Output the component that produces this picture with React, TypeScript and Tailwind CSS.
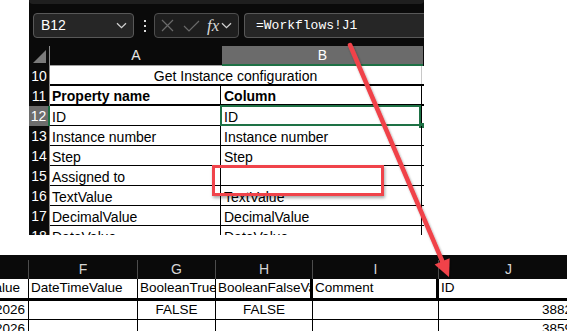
import React from 'react';

const font = "font-['Liberation_Sans',Arial,sans-serif]";

const Chevron: React.FC<{ className?: string }> = ({ className }) => (
  <svg width="11" height="7" viewBox="0 0 11 7" className={className}>
    <path d="M1 1.2 L5.5 5.6 L10 1.2" fill="none" stroke="#d0d0d0" strokeWidth="1.3" />
  </svg>
);

const FormulaBar: React.FC = () => (
  <div className="flex h-[25px] items-center pl-[4px]">
    <div className="flex h-[25px] w-[101px] items-center justify-between rounded-[4px] border border-[#585858] bg-[#262626] pl-[7px] pr-[6px]">
      <span className="text-[14px] text-white">B12</span>
      <Chevron />
    </div>
    <div className="ml-[10px] flex w-[3px] flex-col gap-[3px]">
      <div className="h-[2px] w-[2px] bg-[#d8d8d8]" />
      <div className="h-[2px] w-[2px] bg-[#d8d8d8]" />
      <div className="h-[2px] w-[2px] bg-[#d8d8d8]" />
    </div>
    <div className="ml-[7px] flex h-[25px] w-[85px] items-center rounded-[4px] border border-[#4e4e4e] bg-[#1e1e1e] pl-[6px]">
      <svg width="13" height="13" viewBox="0 0 13 13">
        <path d="M1 1 L12 12 M12 1 L1 12" stroke="#6a6a6a" strokeWidth="1.2" />
      </svg>
      <svg width="17" height="12" viewBox="0 0 17 12" className="ml-[9px]">
        <path d="M1 6 L6 11 L16 1" fill="none" stroke="#6a6a6a" strokeWidth="1.2" />
      </svg>
      <span className="ml-[7px] font-['Liberation_Serif',serif] text-[17px] italic leading-none text-[#d8d8d8]">fx</span>
      <Chevron className="ml-[2px]" />
    </div>
    <div className="ml-[5px] flex h-[25px] flex-1 items-center rounded-l-[4px] border border-r-0 border-[#585858] bg-[#262626] pl-[11px]">
      <span className="font-['Liberation_Mono',monospace] text-[13px] text-white">=Workflows!J1</span>
    </div>
  </div>
);

const TopRow: React.FC<{ n: number; a?: string; b?: string; bold?: boolean; selected?: boolean; thick?: boolean; merged?: string }> = ({ n, a, b, bold, selected, thick, merged }) => (
  <div className="flex h-[20px] shrink-0">
    <div
      className={
        selected
          ? 'flex w-[21px] items-center justify-center border-r-2 border-[#1e7145] bg-[#6d6d6d] text-[14px] text-white'
          : 'flex w-[21px] items-center justify-center border-r border-[#8a8a8a] bg-[#0a0a0a] text-[14px] text-white'
      }
    >
      {n}
    </div>
    <div className={thick ? 'flex flex-1 border-b-2 border-black bg-white text-[14px] leading-[16px] text-black' : 'flex flex-1 border-b border-black bg-white text-[14px] leading-[16px] text-black'}>
      {merged ? (
        <div className="flex w-[372px] items-end justify-center border-r border-[#c8c8c8]">{merged}</div>
      ) : (
        <>
          <div className={bold ? 'flex w-[171px] items-end overflow-hidden whitespace-nowrap border-r border-black pl-[2px] font-bold' : 'flex w-[171px] items-end overflow-hidden whitespace-nowrap border-r border-black pl-[2px]'}>
            {a}
          </div>
          <div className={bold ? 'relative flex w-[201px] items-end whitespace-nowrap border-r border-black pl-[3px] font-bold' : 'relative flex w-[201px] items-end whitespace-nowrap border-r border-black pl-[3px]'}>
            {b}
            {selected && (
              <>
                <div className="absolute -left-[1px] -top-[1px] -bottom-[1px] right-0 border-2 border-[#1e7145]" />
                <div className="absolute -bottom-[3px] -right-[3px] h-[5px] w-[5px] bg-[#1e7145]" />
              </>
            )}
          </div>
        </>
      )}
    </div>
  </div>
);

const TopSheet: React.FC = () => (
  <div className="flex h-[235px]">
    <div className="w-[29px] shrink-0" />
    <div className="flex w-[395px] shrink-0 flex-col overflow-hidden bg-[#0a0a0a]">
      <div className="h-[4px] shrink-0 rounded-b-[4px] bg-[#1f1f1f]" />
      <div className="h-[9px] shrink-0" />
      <FormulaBar />
      <div className="h-[8px] shrink-0" />
      <div className="flex h-[20px] shrink-0">
        <div className="relative w-[21px] border-r border-[#8a8a8a]">
          <svg width="13" height="13" viewBox="0 0 13 13" className="absolute bottom-[3px] right-[3px]">
            <path d="M13 0 L13 13 L0 13 Z" fill="#7a7a7a" />
          </svg>
        </div>
        <div className="flex w-[172px] items-center justify-center border-b border-[#a0a0a0] text-[14px] text-[#e6e6e6]">A</div>
        <div className="flex w-[201px] items-center justify-center border-b-2 border-[#1e7145] bg-[#6b6b6b] text-[14px] text-white">B</div>
      </div>
      <TopRow n={10} merged="Get Instance configuration" thick />
      <TopRow n={11} a="Property name" b="Column" bold thick />
      <TopRow n={12} a="ID" b="ID" selected />
      <TopRow n={13} a="Instance number" b="Instance number" />
      <TopRow n={14} a="Step" b="Step" />
      <TopRow n={15} a="Assigned to" b="" />
      <TopRow n={16} a="TextValue" b="TextValue" />
      <TopRow n={17} a="DecimalValue" b="DecimalValue" />
      <TopRow n={18} a="DateValue" b="DateValue" />
    </div>
  </div>
);

const cols = [29, 109, 78, 97, 126, 140];
const letters = ['', 'F', 'G', 'H', 'I', 'J'];

const BottomSheet: React.FC = () => (
  <div className="flex h-[76px] flex-col overflow-hidden bg-[#0a0a0a] text-[13.5px]">
    <div className="h-[5px] shrink-0" />
    <div className="flex h-[19px] shrink-0">
      {letters.map((l, i) => (
        <div
          key={i}
          style={{ width: cols[i] }}
          className="flex shrink-0 items-center justify-center border-r border-[#4c4c4c] text-[14px] text-[#d6d6d6]"
        >
          {l}
        </div>
      ))}
    </div>
    <div className="flex h-[22px] shrink-0 border-b-[3px] border-black bg-white text-black">
      <div className="flex w-[29px] shrink-0 items-center justify-end overflow-hidden whitespace-nowrap border-r border-black pr-[8px]">DateValue</div>
      <div className="flex w-[109px] shrink-0 items-center overflow-hidden whitespace-nowrap border-r border-black pl-[2px]">DateTimeValue</div>
      <div className="flex w-[78px] shrink-0 items-center overflow-hidden whitespace-nowrap border-r border-black pl-[2px]">BooleanTrueValue</div>
      <div className="flex w-[97px] shrink-0 items-center overflow-hidden whitespace-nowrap border-r-[3px] border-black pl-[2px]">BooleanFalseValue</div>
      <div className="flex w-[126px] shrink-0 items-center overflow-hidden whitespace-nowrap border-r-[3px] border-black pl-[2px]">Comment</div>
      <div className="flex w-[140px] shrink-0 items-center pl-[2px]">ID</div>
    </div>
    {[
      ['2026', 'FALSE', 'FALSE', '38823'],
      ['2026', '', '', '38591'],
    ].map((r, i) => (
      <div key={i} className="flex h-[19px] shrink-0 border-b border-black bg-white text-black">
        <div className="flex w-[29px] shrink-0 items-center justify-end overflow-hidden whitespace-nowrap border-r border-black pr-[3px]">{r[0]}</div>
        <div className="w-[109px] shrink-0 border-r border-black" />
        <div className="flex w-[78px] shrink-0 items-center justify-center border-r border-black">{r[1]}</div>
        <div className="flex w-[97px] shrink-0 items-center justify-center border-r border-black">{r[2]}</div>
        <div className="w-[126px] shrink-0 border-r border-black" />
        <div className="flex w-[140px] shrink-0 items-center overflow-hidden whitespace-nowrap pl-[103px]">{r[3]}</div>
      </div>
    ))}
  </div>
);

export default function App() {
  return (
    <div className={`relative h-[331px] w-[567px] overflow-hidden bg-white ${font}`}>
      <TopSheet />
      <div className="h-[20px]" />
      <BottomSheet />

      {/* callouts */}
      <div className="absolute left-[212px] top-[165px] h-[31px] w-[172px] border-[3px] border-[#f0434a] shadow-[1px_2px_3px_rgba(0,0,0,0.35)]" />
      <svg width="567" height="331" className="pointer-events-none absolute left-0 top-0">
        <defs>
          <filter id="sh" x="-20%" y="-20%" width="140%" height="140%">
            <feDropShadow dx="1" dy="1.5" stdDeviation="1.2" floodColor="#000" floodOpacity="0.35" />
          </filter>
        </defs>
        <g filter="url(#sh)">
          <line x1="350" y1="45" x2="443" y2="263" stroke="#f0434a" strokeWidth="4.5" strokeLinecap="round" />
          <polygon points="449,277 434.6,264.6 449.6,258.2" fill="#f0434a" />
        </g>
      </svg>
    </div>
  );
}
